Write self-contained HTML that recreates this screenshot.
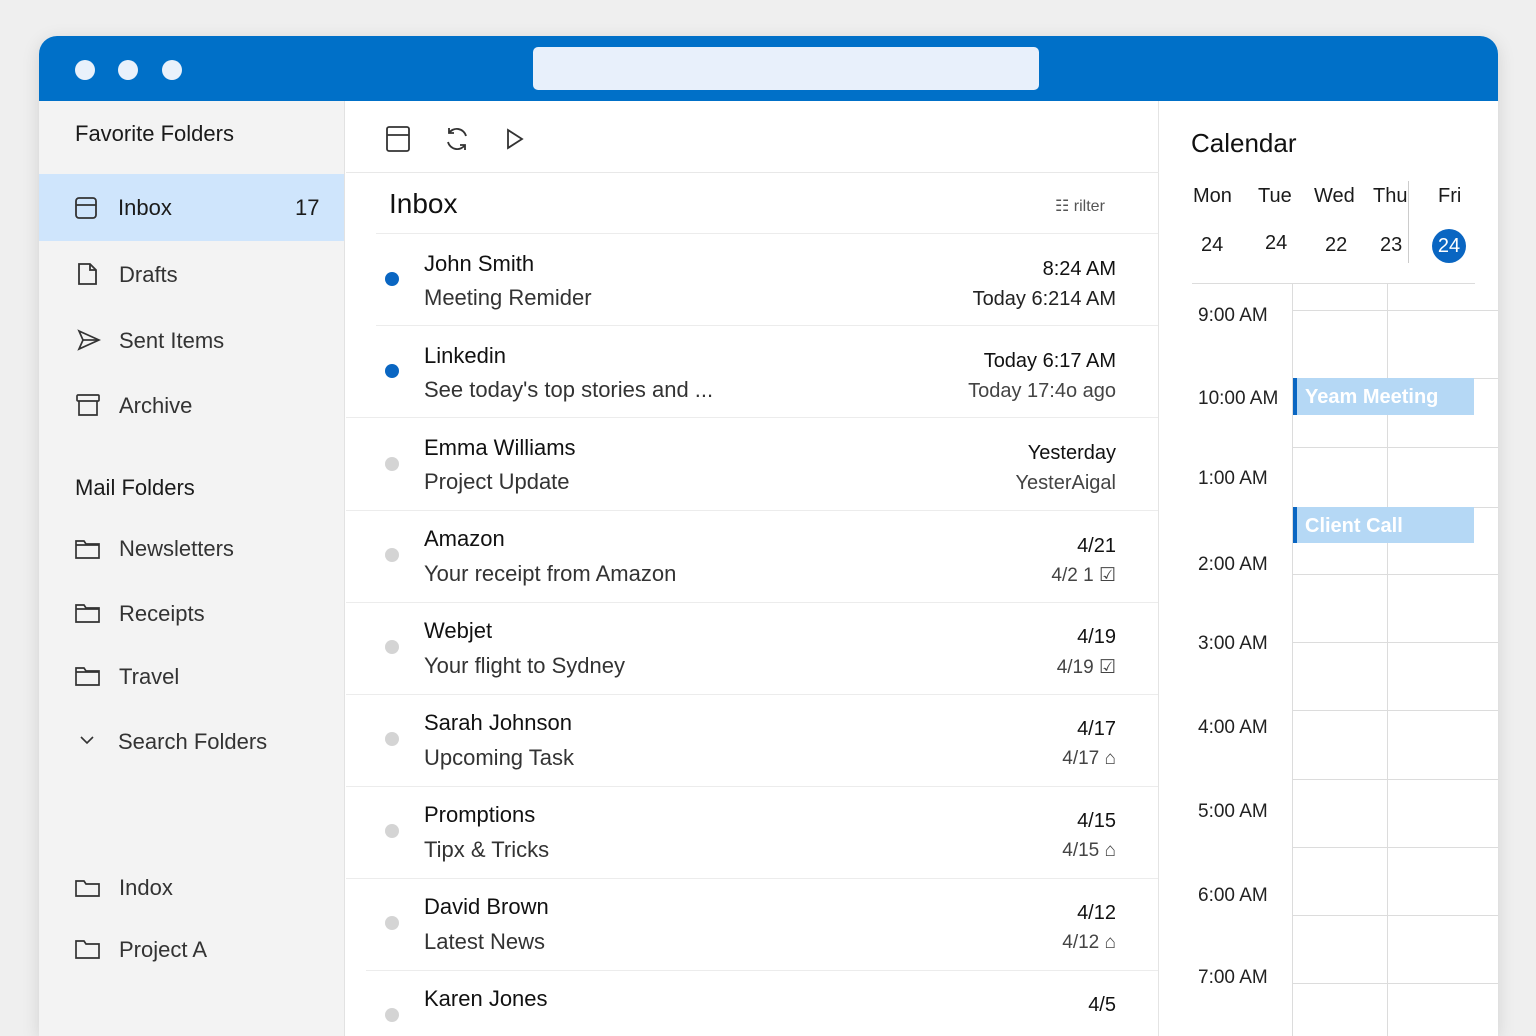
<!DOCTYPE html>
<html><head><meta charset="utf-8"><style>
*{margin:0;padding:0;box-sizing:border-box}
body{width:1536px;height:1024px;background:#efefef;font-family:"Liberation Sans",sans-serif;color:#1b1b1b;position:relative;overflow:hidden}
.win{position:absolute;left:39px;top:36px;width:1459px;height:1000px;background:#fff;border-radius:18px 18px 0 0;overflow:hidden;box-shadow:0 4px 18px rgba(0,0,0,.12)}
.tb{position:absolute;left:0;top:0;width:100%;height:65px;background:#0070c8}
.dot{position:absolute;top:24px;width:20px;height:20px;border-radius:50%;background:#e9f1fb}
.search{position:absolute;left:494px;top:11px;width:506px;height:43px;background:#e8f0fb;border-radius:5px}
.side{position:absolute;left:0;top:65px;width:306px;height:940px;background:#f3f3f3;border-right:1px solid #e2e2e2}
.t{position:absolute;white-space:nowrap}
.ico{position:absolute}
.list{position:absolute;left:307px;top:65px;width:813px;height:940px;background:#fff;border-right:1px solid #e4e4e4}
.sep{position:absolute;left:20px;right:0;height:1px;background:#ececec}
.cal{position:absolute;left:1121px;top:65px;width:338px;height:940px;background:#fff}
.hl{position:absolute;height:1px;background:#dcdcdc}
.vl{position:absolute;width:1px;background:#dcdcdc}
</style></head><body>
<div class="win">
<div class="tb">
<div class="dot" style="left:36px"></div><div class="dot" style="left:79px"></div><div class="dot" style="left:123px"></div>
<div class="search"></div>
</div>
<div class="side">
<div class="t" style="left:36px;top:20px;font-size:22px">Favorite Folders</div>
<div style="position:absolute;left:0;top:73px;width:305px;height:67px;background:#cfe5fc"></div>
<svg class="ico" style="left:36px;top:96px" width="22" height="22" viewBox="0 0 22 22" fill="none" stroke="#333" stroke-width="1.8"><rect x="1" y="1" width="20" height="20" rx="3"/><line x1="1" y1="8" x2="21" y2="8"/></svg>
<div class="t" style="left:79px;top:94px;font-size:22px">Inbox</div>
<div class="t" style="left:256px;top:94px;font-size:22px">17</div>
<svg class="ico" style="left:38px;top:161px" width="22" height="24" viewBox="0 0 22 24" fill="none" stroke="#333" stroke-width="1.8"><path d="M2 2h11l6 6v14H2z"/><path d="M13 2v6h6"/></svg>
<div class="t" style="left:80px;top:161px;font-size:22px;color:#333">Drafts</div>
<svg class="ico" style="left:38px;top:228px" width="24" height="22" viewBox="0 0 24 22" fill="none" stroke="#333" stroke-width="1.7"><path d="M2 2l20 9-20 9 4-9z"/><path d="M6 11h16"/></svg>
<div class="t" style="left:80px;top:227px;font-size:22px;color:#333">Sent Items</div>
<svg class="ico" style="left:37px;top:293px" width="24" height="22" viewBox="0 0 24 22" fill="none" stroke="#333" stroke-width="1.7"><rect x="1" y="1" width="22" height="6" rx="1"/><path d="M3 7v14h18V7"/></svg>
<div class="t" style="left:80px;top:292px;font-size:22px;color:#333">Archive</div>
<div class="t" style="left:36px;top:374px;font-size:22px">Mail Folders</div>
<svg class="ico" style="left:36px;top:438px" width="25" height="20" viewBox="0 0 25 20" fill="none" stroke="#333" stroke-width="1.7"><path d="M1 2h8l2 3h13v14H1z"/><path d="M1 6h23"/></svg>
<div class="t" style="left:80px;top:435px;font-size:22px;color:#333">Newsletters</div>
<svg class="ico" style="left:36px;top:502px" width="25" height="20" viewBox="0 0 25 20" fill="none" stroke="#333" stroke-width="1.7"><path d="M1 2h8l2 3h13v14H1z"/><path d="M1 6h23"/></svg>
<div class="t" style="left:80px;top:500px;font-size:22px;color:#333">Receipts</div>
<svg class="ico" style="left:36px;top:565px" width="25" height="20" viewBox="0 0 25 20" fill="none" stroke="#333" stroke-width="1.7"><path d="M1 2h8l2 3h13v14H1z"/><path d="M1 6h23"/></svg>
<div class="t" style="left:80px;top:563px;font-size:22px;color:#333">Travel</div>
<svg class="ico" style="left:40px;top:634px" width="16" height="10" viewBox="0 0 16 10" fill="none" stroke="#333" stroke-width="1.6"><path d="M2 2l6 6 6-6"/></svg>
<div class="t" style="left:79px;top:628px;font-size:22px;color:#333">Search Folders</div>
<svg class="ico" style="left:36px;top:778px" width="25" height="18" viewBox="0 0 25 18" fill="none" stroke="#333" stroke-width="1.7"><path d="M1 2h8l2 3h13v12H1z"/></svg>
<div class="t" style="left:80px;top:774px;font-size:22px;color:#333">Indox</div>
<svg class="ico" style="left:36px;top:838px" width="25" height="20" viewBox="0 0 25 20" fill="none" stroke="#333" stroke-width="1.7"><path d="M1 2h8l2 3h13v14H1z"/></svg>
<div class="t" style="left:80px;top:836px;font-size:22px;color:#333">Project A</div>
</div>
<div class="list">
<svg class="ico" style="left:40px;top:25px" width="24" height="26" viewBox="0 0 24 26" fill="none" stroke="#333" stroke-width="1.8"><rect x="1" y="1" width="22" height="24" rx="2"/><line x1="1" y1="9" x2="23" y2="9"/></svg>
<svg class="ico" style="left:98px;top:25px" width="26" height="26" viewBox="0 0 26 26" fill="none" stroke="#333" stroke-width="1.8"><path d="M22 10A9.5 9.5 0 0 0 5 7M4 16a9.5 9.5 0 0 0 17 3"/><path d="M5 2v5h5M21 24v-5h-5"/></svg>
<svg class="ico" style="left:160px;top:27px" width="18" height="22" viewBox="0 0 18 22" fill="none" stroke="#333" stroke-width="1.8"><path d="M2 2l14 9-14 9z"/></svg>
<div style="position:absolute;left:0;top:71px;width:813px;height:1px;background:#e8e8e8"></div>
<div class="t" style="left:43px;top:87px;font-size:28px;color:#111">Inbox</div>
<div class="t" style="left:709px;top:95px;font-size:16px;color:#555">☷ rilter</div>
<div class="sep" style="top:132px;left:30px"></div>
<div class="sep" style="top:224px;left:30px"></div>
<div class="sep" style="top:316px;left:0"></div>
<div class="sep" style="top:409px;left:0"></div>
<div class="sep" style="top:501px;left:0"></div>
<div class="sep" style="top:593px;left:0"></div>
<div class="sep" style="top:685px;left:0"></div>
<div class="sep" style="top:777px;left:0"></div>
<div class="sep" style="top:869px;left:20px"></div>
</div>
<div style="position:absolute;left:307px;top:0;width:813px;height:1000px;font-size:22px">
<div style="position:absolute;left:39px;top:236px;width:14px;height:14px;border-radius:50%;background:#0a66c2"></div>
<div class="t" style="left:78px;top:215px;color:#111">John Smith</div>
<div class="t" style="left:78px;top:249px;color:#333">Meeting Remider</div>
<div class="t" style="right:43px;top:222px;font-size:20px;color:#111">8:24 AM</div>
<div class="t" style="right:43px;top:252px;font-size:20px;color:#222">Today 6:214 AM</div>

<div style="position:absolute;left:39px;top:328px;width:14px;height:14px;border-radius:50%;background:#0a66c2"></div>
<div class="t" style="left:78px;top:307px;color:#111">Linkedin</div>
<div class="t" style="left:78px;top:341px;color:#333">See today's top stories and ...</div>
<div class="t" style="right:43px;top:314px;font-size:20px;color:#111">Today 6:17 AM</div>
<div class="t" style="right:43px;top:344px;font-size:20px;color:#444">Today 17:4o ago</div>

<div style="position:absolute;left:39px;top:421px;width:14px;height:14px;border-radius:50%;background:#d4d4d4"></div>
<div class="t" style="left:78px;top:399px;color:#111">Emma Williams</div>
<div class="t" style="left:78px;top:433px;color:#333">Project Update</div>
<div class="t" style="right:43px;top:406px;font-size:20px;color:#111">Yesterday</div>
<div class="t" style="right:43px;top:436px;font-size:20px;color:#444">YesterAigal</div>

<div style="position:absolute;left:39px;top:512px;width:14px;height:14px;border-radius:50%;background:#d4d4d4"></div>
<div class="t" style="left:78px;top:490px;color:#111">Amazon</div>
<div class="t" style="left:78px;top:525px;color:#333">Your receipt from Amazon</div>
<div class="t" style="right:43px;top:499px;font-size:20px;color:#111">4/21</div>
<div class="t" style="right:43px;top:528px;font-size:19px;color:#444">4/2 1 ☑</div>

<div style="position:absolute;left:39px;top:604px;width:14px;height:14px;border-radius:50%;background:#d4d4d4"></div>
<div class="t" style="left:78px;top:582px;color:#111">Webjet</div>
<div class="t" style="left:78px;top:617px;color:#333">Your flight to Sydney</div>
<div class="t" style="right:43px;top:590px;font-size:20px;color:#111">4/19</div>
<div class="t" style="right:43px;top:620px;font-size:19px;color:#444">4/19 ☑</div>

<div style="position:absolute;left:39px;top:696px;width:14px;height:14px;border-radius:50%;background:#d4d4d4"></div>
<div class="t" style="left:78px;top:674px;color:#111">Sarah Johnson</div>
<div class="t" style="left:78px;top:709px;color:#333">Upcoming Task</div>
<div class="t" style="right:43px;top:682px;font-size:20px;color:#111">4/17</div>
<div class="t" style="right:43px;top:712px;font-size:19px;color:#444">4/17 ⌂</div>

<div style="position:absolute;left:39px;top:788px;width:14px;height:14px;border-radius:50%;background:#d4d4d4"></div>
<div class="t" style="left:78px;top:766px;color:#111">Promptions</div>
<div class="t" style="left:78px;top:801px;color:#333">Tipx &amp; Tricks</div>
<div class="t" style="right:43px;top:774px;font-size:20px;color:#111">4/15</div>
<div class="t" style="right:43px;top:804px;font-size:19px;color:#444">4/15 ⌂</div>

<div style="position:absolute;left:39px;top:880px;width:14px;height:14px;border-radius:50%;background:#d4d4d4"></div>
<div class="t" style="left:78px;top:858px;color:#111">David Brown</div>
<div class="t" style="left:78px;top:893px;color:#333">Latest News</div>
<div class="t" style="right:43px;top:866px;font-size:20px;color:#111">4/12</div>
<div class="t" style="right:43px;top:896px;font-size:19px;color:#444">4/12 ⌂</div>

<div style="position:absolute;left:39px;top:972px;width:14px;height:14px;border-radius:50%;background:#d4d4d4"></div>
<div class="t" style="left:78px;top:950px;color:#111">Karen Jones</div>
<div class="t" style="right:43px;top:958px;font-size:20px;color:#111">4/5</div>
</div>
<div class="cal">
<div class="t" style="left:31px;top:27px;font-size:26px;color:#111">Calendar</div>
<div class="t" style="left:33px;top:84px;font-size:20px">Mon</div>
<div class="t" style="left:98px;top:84px;font-size:20px">Tue</div>
<div class="t" style="left:154px;top:84px;font-size:20px">Wed</div>
<div class="t" style="left:213px;top:84px;font-size:20px">Thu</div>
<div class="t" style="left:278px;top:84px;font-size:20px">Fri</div>
<div class="vl" style="left:248px;top:80px;height:82px;background:#ccc"></div>
<div class="t" style="left:41px;top:133px;font-size:20px">24</div>
<div class="t" style="left:105px;top:131px;font-size:20px">24</div>
<div class="t" style="left:165px;top:133px;font-size:20px">22</div>
<div class="t" style="left:220px;top:133px;font-size:20px">23</div>
<div style="position:absolute;left:272px;top:128px;width:34px;height:34px;border-radius:50%;background:#0a66c2;color:#fff;font-size:20px;text-align:center;line-height:34px">24</div>
<div class="hl" style="left:32px;top:182px;width:283px"></div>
<div class="vl" style="left:132px;top:182px;height:760px"></div>
<div class="vl" style="left:227px;top:182px;height:760px"></div>
<div class="hl" style="left:132px;top:209px;width:206px"></div>
<div class="hl" style="left:132px;top:277px;width:206px"></div>
<div class="hl" style="left:132px;top:346px;width:206px"></div>
<div class="hl" style="left:132px;top:406px;width:206px"></div>
<div class="hl" style="left:132px;top:473px;width:206px"></div>
<div class="hl" style="left:132px;top:541px;width:206px"></div>
<div class="hl" style="left:132px;top:609px;width:206px"></div>
<div class="hl" style="left:132px;top:678px;width:206px"></div>
<div class="hl" style="left:132px;top:746px;width:206px"></div>
<div class="hl" style="left:132px;top:814px;width:206px"></div>
<div class="hl" style="left:132px;top:882px;width:206px"></div>
<div class="t" style="left:38px;top:204px;font-size:19px;color:#222">9:00 AM</div>
<div class="t" style="left:38px;top:287px;font-size:19px;color:#222">10:00 AM</div>
<div class="t" style="left:38px;top:367px;font-size:19px;color:#222">1:00 AM</div>
<div class="t" style="left:38px;top:453px;font-size:19px;color:#222">2:00 AM</div>
<div class="t" style="left:38px;top:532px;font-size:19px;color:#222">3:00 AM</div>
<div class="t" style="left:38px;top:616px;font-size:19px;color:#222">4:00 AM</div>
<div class="t" style="left:38px;top:700px;font-size:19px;color:#222">5:00 AM</div>
<div class="t" style="left:38px;top:784px;font-size:19px;color:#222">6:00 AM</div>
<div class="t" style="left:38px;top:866px;font-size:19px;color:#222">7:00 AM</div>
<div style="position:absolute;left:133px;top:277px;width:181px;height:37px;background:#b5d8f5;border-left:4px solid #0a66c2;color:#fff;font-size:20px;font-weight:600;padding:8px 0 0 8px">Yeam Meeting</div>
<div style="position:absolute;left:133px;top:406px;width:181px;height:36px;background:#b5d8f5;border-left:4px solid #0a66c2;color:#fff;font-size:20px;font-weight:600;padding:8px 0 0 8px">Client Call</div>
</div>
</div>
</body></html>
